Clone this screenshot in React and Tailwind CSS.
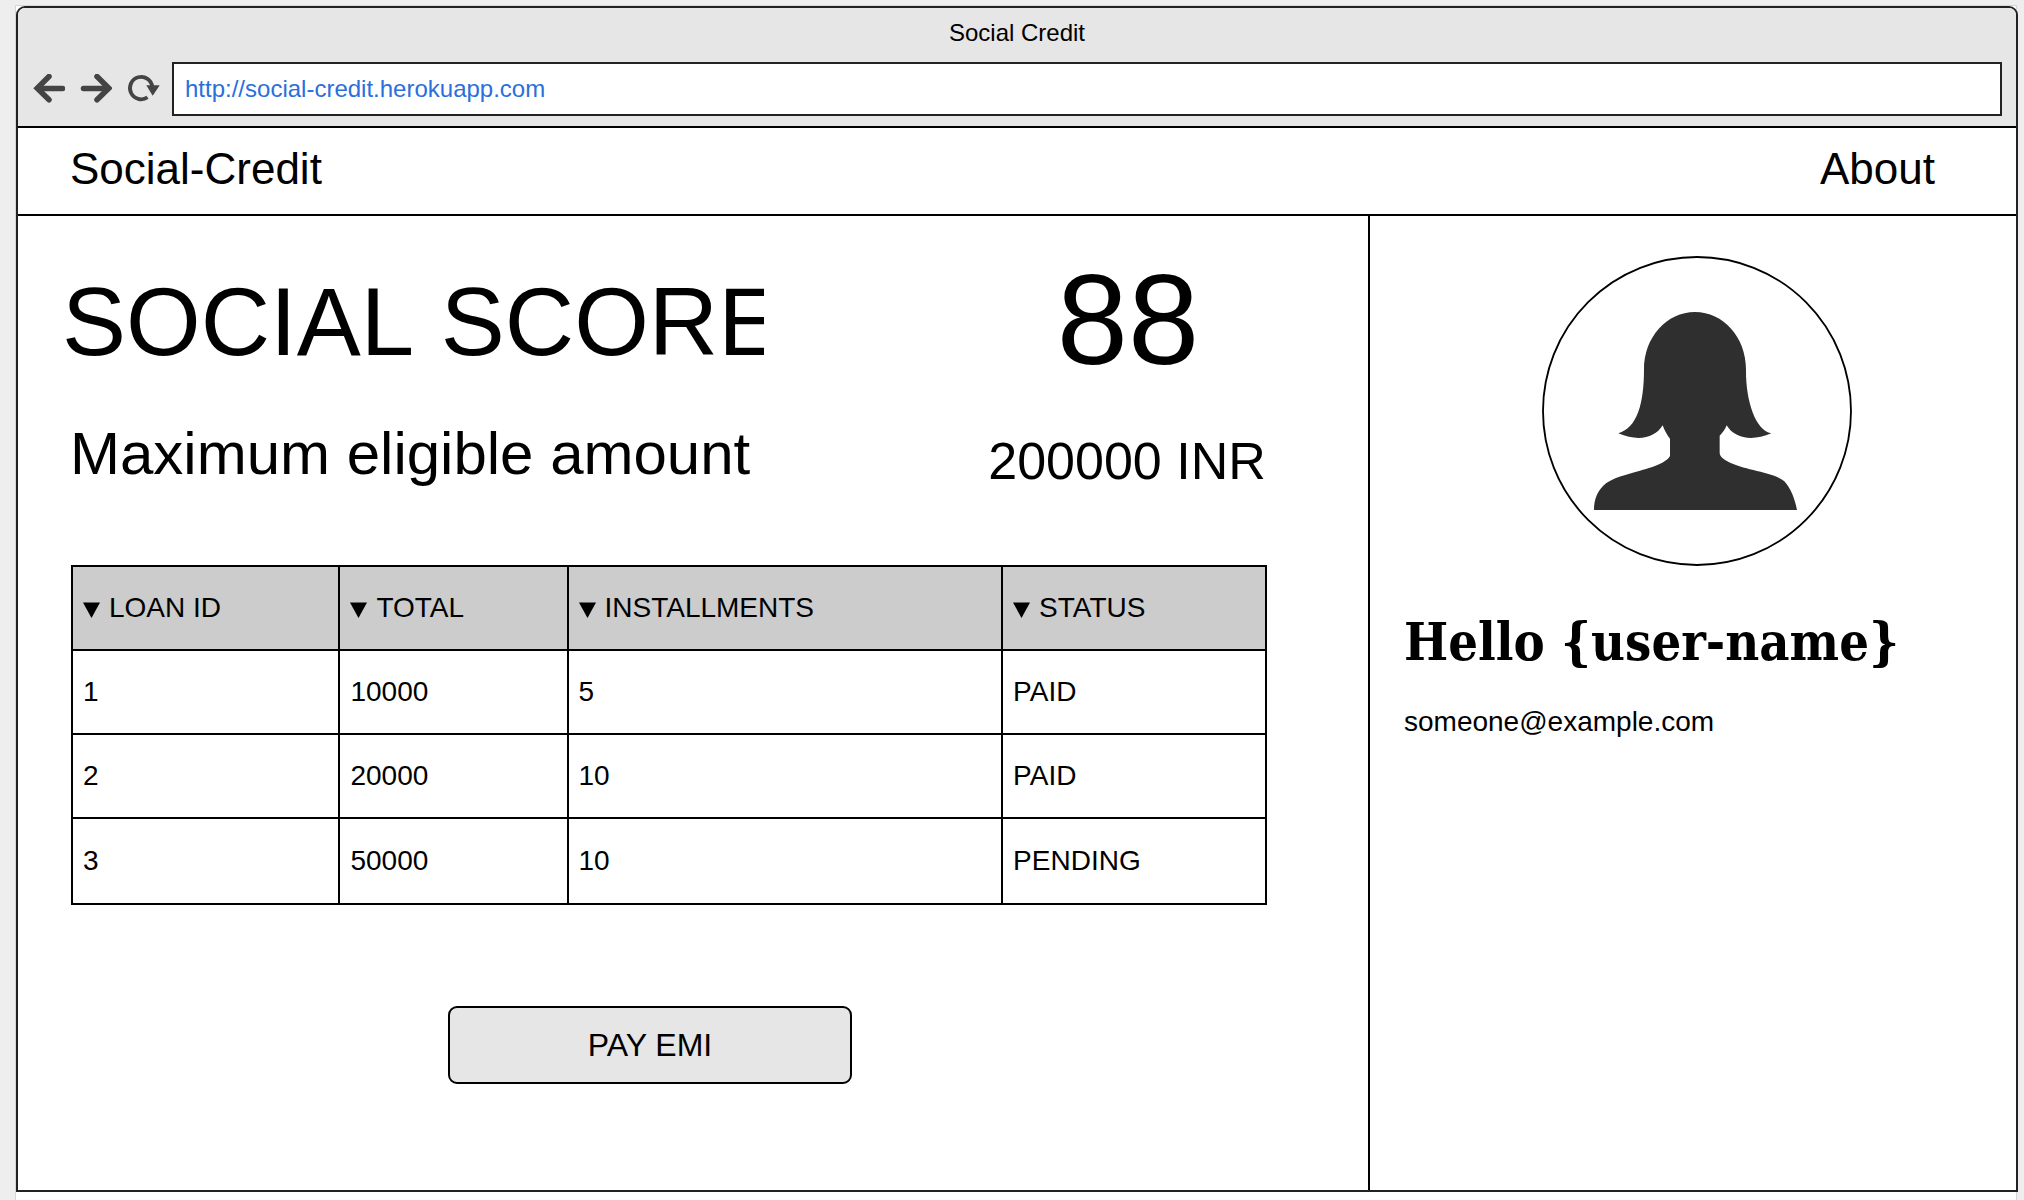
const loans = [
  { id: "1", total: "10000", installments: "5", status: "PAID" },
  { id: "2", total: "20000", installments: "10", status: "PAID" },
  { id: "3", total: "50000", installments: "10", status: "PENDING" },
];

const columns = [
  { label: "LOAN ID", width: "w-[22.4%]" },
  { label: "TOTAL", width: "w-[19.1%]" },
  { label: "INSTALLMENTS", width: "w-[36.4%]" },
  { label: "STATUS", width: "w-[22.1%]" },
];

function BackIcon() {
  return (
    <svg className="h-[30px] w-8" viewBox="0 0 32 30" fill="none" stroke="#444" strokeWidth="5.5" strokeLinecap="round" aria-hidden="true">
      <path d="M16 2.500 4.200 14.200 16 25.800" />
      <path d="M6 14.500h23.500" />
    </svg>
  );
}

function ForwardIcon() {
  return (
    <svg className="h-[30px] w-8" viewBox="0 0 32 30" fill="none" stroke="#444" strokeWidth="5.5" strokeLinecap="round" aria-hidden="true">
      <path d="M17 2.500 28.800 14.200 17 25.800" />
      <path d="M3.500 14.500H27" />
    </svg>
  );
}

function ReloadIcon() {
  return (
    <svg className="h-[30px] w-8 overflow-visible" viewBox="0 0 32 30" fill="none" aria-hidden="true">
      <path d="M25.300 13A11.200 11.200 0 1 0 20.500 23.300" stroke="#444" strokeWidth="3.8" />
      <path d="M19.300 11.300H32.700L25.700 21.800Z" fill="#444" />
    </svg>
  );
}

function Avatar() {
  return (
    <svg className="mx-auto h-[310px] w-[310px]" viewBox="126 78 930 930" role="img" aria-label="User avatar">
      <circle cx="591" cy="543" r="462" fill="#fff" stroke="#000" strokeWidth="5.500" />
      <path
        fill="#2f2f2f"
        d="M585 246C500 246 432 322 432 418C432 520 412 594 355 610C415 636 465 624 488 586C494 602 502 617 510 626V676C510 690 470 710 420 722C375 735 340 743 318 760C292 782 282 808 282 840H891C884 805 872 775 853 754C833 737 795 729 760 720C705 706 659 690 659 668V617C668 608 676 597 680 586C702 624 755 636 814 610C765 600 737 510 738 418C738 322 670 246 585 246Z"
      />
    </svg>
  );
}

export default function App() {
  return (
    <div className="min-h-screen bg-[#eeeeee] pt-[5px] pr-[7px] pl-[15px] font-['Liberation_Sans',Arial,sans-serif] text-black">
      <div className="flex min-h-[calc(100vh-5px)] flex-col border border-b-0 border-[#d6d6d6] bg-white pb-2">
        <div className="-mr-[2px] flex flex-1 flex-col overflow-hidden rounded-t-[9px] border-2 border-[#222222] bg-white">
          <header className="border-b-2 border-black bg-[#e6e6e6] pb-[10px]">
            <div className="pb-[4px] text-center text-2xl leading-[50px]">Social Credit</div>
            <div className="flex items-center gap-[13px] pr-[14px] pl-[15px]">
              <div className="flex items-center gap-[15px]">
                <button type="button" aria-label="Back"><BackIcon /></button>
                <button type="button" aria-label="Forward"><ForwardIcon /></button>
                <button type="button" aria-label="Reload"><ReloadIcon /></button>
              </div>
              <input
                type="text"
                aria-label="Address"
                defaultValue="http://social-credit.herokuapp.com"
                className="h-[54px] min-w-0 flex-1 border-2 border-[#222222] bg-white px-[11px] text-2xl text-[#2a6fdb] outline-none"
              />
            </div>
          </header>

          <nav className="flex h-[88px] items-center justify-between border-b-2 border-black pr-[81px] pb-1 pl-[52px] text-[44px] leading-none">
            <a href="#home">Social-Credit</a>
            <a href="#about">About</a>
          </nav>

          <div className="grid flex-1 grid-cols-[1352fr_646fr]">
            <main className="min-w-0 border-r-2 border-black pt-10">
              <div className="flex items-end justify-between pr-[101px] pl-11">
                <h1 className="w-[702px] overflow-hidden text-[96px] leading-[124px] whitespace-nowrap [font-kerning:none]">SOCIAL SCORE</h1>
                <div className="w-[278px] text-center text-[128px] leading-none">88</div>
              </div>
              <div className="mt-[34px] flex items-end justify-between pr-[101px] pl-[52px] whitespace-nowrap">
                <h2 className="text-[60px] leading-[72px]">Maximum eligible amount</h2>
                <div className="w-[280px] text-center text-[52px] leading-[58px]">200000 INR</div>
              </div>

              <div className="mt-[75px] pr-[101px] pl-[53px]">
                <table className="w-full table-fixed border-collapse text-left text-[28px] leading-8">
                  <thead>
                    <tr className="h-[84px] bg-[#cccccc]">
                      {columns.map((c) => (
                        <th key={c.label} scope="col" className={`${c.width} border-2 border-black px-[10px] font-normal`}>
                          <button type="button" className="flex items-center gap-[9px]">
                            <svg className="mt-1 h-4 w-[17px]" viewBox="0 0 17 16" aria-hidden="true">
                              <path d="M0 .5h17L8.500 16Z" />
                            </svg>
                            {c.label}
                          </button>
                        </th>
                      ))}
                    </tr>
                  </thead>
                  <tbody>
                    {loans.map((l) => (
                      <tr key={l.id} className="h-[84px] last:h-[86px]">
                        <td className="border-2 border-black px-[10px]">{l.id}</td>
                        <td className="border-2 border-black px-[10px]">{l.total}</td>
                        <td className="border-2 border-black px-[10px]">{l.installments}</td>
                        <td className="border-2 border-black px-[10px]">{l.status}</td>
                      </tr>
                    ))}
                  </tbody>
                </table>

                <div className="mt-[101px] flex justify-center pr-[38px]">
                  <button type="button" className="h-[78px] w-[404px] rounded-[9px] border-2 border-black bg-[#e6e6e6] text-[32px] leading-none">
                    PAY EMI
                  </button>
                </div>
              </div>
            </main>

            <aside className="min-w-0 pt-10 pr-[26px] pl-[34px]">
              <Avatar />
              <h2 className="mt-11 font-['DejaVu_Serif_Condensed','Liberation_Serif',serif] text-[52px] leading-[64px] font-bold whitespace-nowrap">
                Hello {"{user-name}"}
              </h2>
              <p className="mt-8 text-[28px] leading-8">someone@example.com</p>
            </aside>
          </div>
        </div>
      </div>
    </div>
  );
}
